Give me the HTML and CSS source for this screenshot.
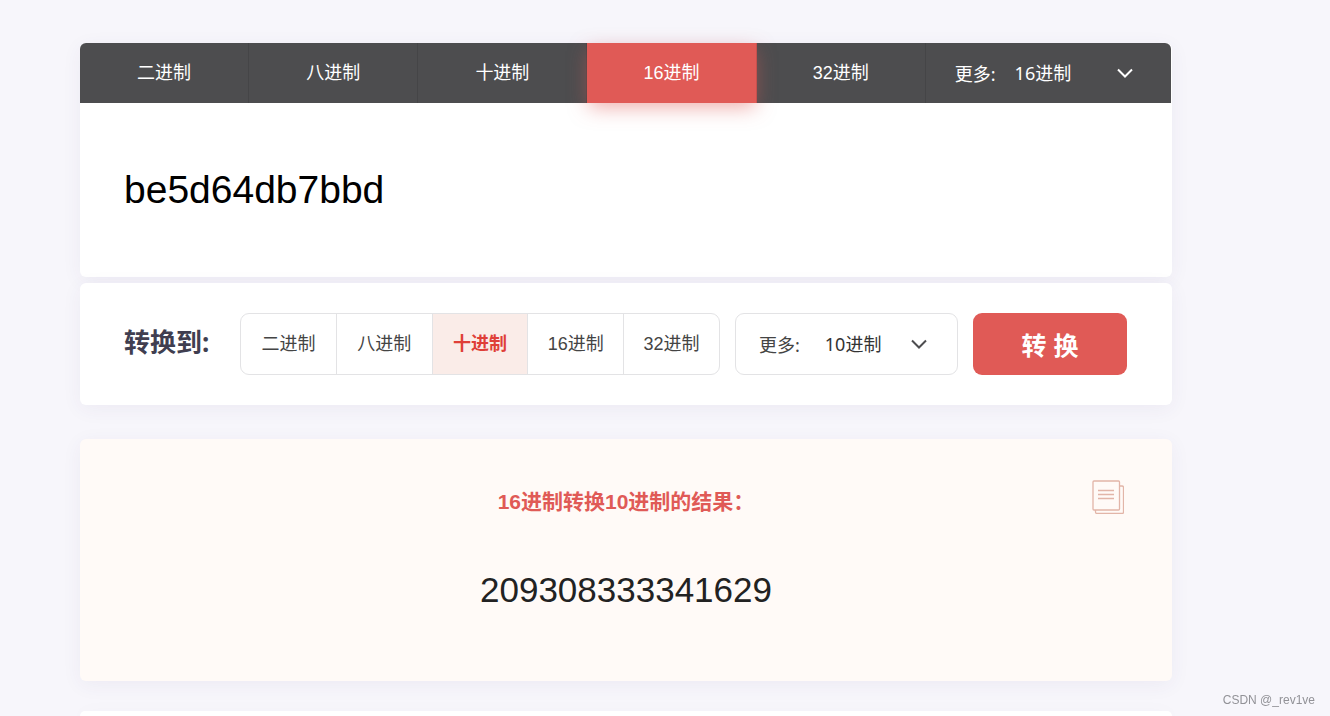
FILE: index.html
```html
<!DOCTYPE html>
<html lang="zh-CN">
<head>
<meta charset="utf-8">
<title>进制转换</title>
<link rel="stylesheet" href="styles.css">
</head>
<body>
<main class="page">
  <section class="source card">
    <div class="tabs">
      <button type="button" class="tab">二进制</button>
      <button type="button" class="tab">八进制</button>
      <button type="button" class="tab">十进制</button>
      <button type="button" class="tab tab-active">16进制</button>
      <button type="button" class="tab">32进制</button>
      <div class="tab-more">
        <label for="from-base">更多:</label>
        <span class="picker">
          <select id="from-base" class="select select-light"><option>16进制</option></select>
          <svg class="chevron chevron-light" viewBox="0 0 16 10"><path d="M1 1.500 8 8.500 15 1.500"/></svg>
        </span>
      </div>
    </div>
    <textarea class="number-input" aria-label="输入数字" spellcheck="false">be5d64db7bbd</textarea>
  </section>

  <section class="convert card">
    <h2 class="convert-title">转换到:</h2>
    <div class="bases">
      <button type="button" class="base">二进制</button>
      <button type="button" class="base">八进制</button>
      <button type="button" class="base base-active">十进制</button>
      <button type="button" class="base">16进制</button>
      <button type="button" class="base">32进制</button>
    </div>
    <div class="base-more">
      <label for="to-base">更多:</label>
      <span class="picker">
        <select id="to-base" class="select"><option>10进制</option></select>
        <svg class="chevron" viewBox="0 0 16 10"><path d="M1 1.500 8 8.500 15 1.500"/></svg>
      </span>
    </div>
    <button type="button" class="submit">转 换</button>
  </section>

  <section class="result card">
    <h3 class="result-title">16进制转换10进制的结果：</h3>
    <p class="result-value">209308333341629</p>
    <button type="button" class="copy" aria-label="复制">
      <svg viewBox="0 0 32 34" width="32" height="34">
        <path d="M28 6h2a1.500 1.500 0 0 1 1.500 1.500v24.500a1.500 1.500 0 0 1-1.500 1.500H5a1.500 1.500 0 0 1-1.500-1.500V30"/>
        <rect x="1" y="1" width="26.500" height="29" rx="1"/>
        <path d="M6 10.500h16M6 14.500h16M6 18.500h16"/>
      </svg>
    </button>
  </section>

  <section class="next card"></section>
</main>
<div class="watermark">CSDN @_rev1ve</div>
</body>
</html>
```

FILE: styles.css
```css
* {
  box-sizing: border-box;
}

body {
  margin: 0;
  background: #f7f6fb;
  color: #444;
  font-family: "Liberation Sans", "Noto Sans CJK SC", sans-serif;
  font-size: 18px;
}

button,
select,
textarea {
  margin: 0;
  padding: 0;
  border: 0;
  border-radius: 0;
  background: none;
  color: inherit;
  font: inherit;
}

.page {
  display: flex;
  flex-direction: column;
  min-height: 100vh;
  padding: 43px 158px 0 80px;
}

.card {
  border-radius: 6px;
  background: #fff;
  box-shadow: 0 4px 20px rgba(60, 50, 120, 0.06);
}

.tabs {
  display: grid;
  grid-template-columns: repeat(5, 169fr) 245fr;
  height: 60px;
  margin-right: 1px;
  border-radius: 6px 6px 0 0;
  background: #4d4d4f;
  color: #fff;
}

.tab {
  padding-bottom: 4px;
  border-right: 1px solid #454547;
}

.tab-active {
  border-right-color: #c7504d;
  background: #e05a56;
  box-shadow: 0 6px 20px -2px rgba(224, 90, 86, 0.5);
}

.tab-more {
  display: flex;
  align-items: center;
  gap: 19px;
  padding: 0 38px 0 29px;
}

.tab-more label,
.base-more label,
.select {
  font-family: "Noto Sans", "Noto Sans CJK SC", sans-serif;
}

.picker {
  flex: 1;
  display: grid;
  align-items: center;
}

.select {
  grid-area: 1 / 1;
  width: 100%;
  height: 30px;
  appearance: none;
  color: #333;
}

.select-light {
  color: #fff;
}

.chevron {
  grid-area: 1 / 1;
  justify-self: end;
  width: 16px;
  height: 10px;
  fill: none;
  stroke: #4d4d4f;
  stroke-width: 2;
  pointer-events: none;
}

.chevron-light {
  stroke: #fff;
}

.number-input {
  display: block;
  width: 100%;
  height: 174px;
  padding: 64px 44px 0;
  outline: 0;
  resize: none;
  color: #000;
  font-size: 39px;
  line-height: 46px;
}

.convert {
  display: grid;
  grid-template-columns: 101fr 480fr 223fr 154fr;
  gap: 15px;
  align-items: center;
  margin-top: 6px;
  padding: 30px 45px 30px 44px;
}

.convert-title {
  margin: 0;
  padding-bottom: 4px;
  color: #403e50;
  font-family: "Noto Sans", "Noto Sans CJK SC", sans-serif;
  font-size: 26px;
  line-height: 32px;
  white-space: nowrap;
}

.bases {
  display: flex;
  height: 62px;
  overflow: hidden;
  border: 1px solid #e3e3e5;
  border-radius: 9px;
}

.base {
  flex: 1;
  padding-bottom: 4px;
  border-right: 1px solid #e3e3e5;
}

.base:last-child {
  border-right: 0;
}

.base-active {
  background: #faece8;
  color: #df3f38;
  font-weight: bold;
}

.base-more {
  display: flex;
  align-items: center;
  gap: 25px;
  height: 62px;
  padding: 0 30px 0 23px;
  border: 1px solid #e3e3e5;
  border-radius: 9px;
}

.submit {
  height: 62px;
  border-radius: 9px;
  background: #e05a56;
  color: #fff;
  font-size: 25px;
  font-weight: bold;
}

.result {
  position: relative;
  margin-top: 34px;
  padding: 48px 0 70px;
  background: #fffaf7;
  text-align: center;
}

.result-title {
  margin: 0;
  color: #e05a56;
  font-size: 21px;
  line-height: 30px;
}

.result-value {
  margin: 52px 0 0;
  color: #222;
  font-size: 35px;
  line-height: 42px;
}

.copy {
  position: absolute;
  top: 41px;
  right: 48px;
  width: 32px;
  height: 34px;
}

.copy svg {
  display: block;
  fill: none;
  stroke: #e2b5a8;
  stroke-width: 1.3;
}

.next {
  flex: 1;
  margin-top: 30px;
  border-radius: 6px 6px 0 0;
}

.watermark {
  position: fixed;
  right: 15px;
  bottom: 8px;
  color: #929297;
  font-size: 12px;
  line-height: 15px;
}
```
